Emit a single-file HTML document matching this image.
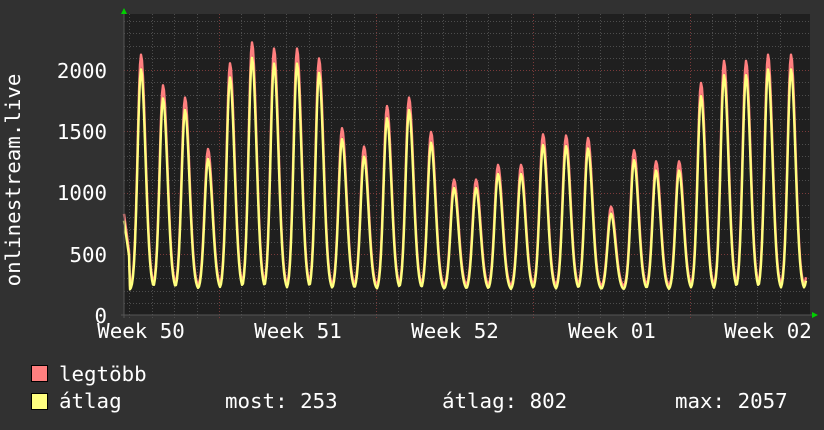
<!DOCTYPE html>
<html><head><meta charset="utf-8"><style>
html,body{margin:0;padding:0;background:#313131;}
svg{display:block}
text{font-family:"DejaVu Sans Mono","Liberation Mono",monospace;font-size:20.8px;fill:#fff}
</style></head><body>
<svg id="s" width="824" height="430" xmlns="http://www.w3.org/2000/svg">
<rect width="824" height="430" fill="#313131"/>
<rect x="124" y="14" width="686" height="301" fill="#1f1f1f"/>
<g id="grid"></g>
<polyline id="pr" fill="none" stroke="#ff7f7f" stroke-width="2.4" stroke-linejoin="round"/>
<polyline id="py" fill="none" stroke="#ffff7f" stroke-width="2.4" stroke-linejoin="round"/>
<line x1="124" y1="10" x2="124" y2="318" stroke="#555" stroke-width="1"/>
<line x1="121" y1="315" x2="814" y2="315" stroke="#555" stroke-width="1"/>
<polygon points="121,14 127,14 124,8" fill="#00d000"/>
<polygon points="812,312 812,318 818,315" fill="#00d000"/>
<text x="107" y="78" text-anchor="end">2000</text>
<text x="107" y="139" text-anchor="end">1500</text>
<text x="107" y="200" text-anchor="end">1000</text>
<text x="107" y="262" text-anchor="end">500</text>
<text x="107" y="323" text-anchor="end">0</text>
<text x="141" y="338" text-anchor="middle">Week 50</text>
<text x="298" y="338" text-anchor="middle">Week 51</text>
<text x="455" y="338" text-anchor="middle">Week 52</text>
<text x="612" y="338" text-anchor="middle">Week 01</text>
<text x="768" y="338" text-anchor="middle">Week 02</text>
<text transform="translate(20,180) rotate(-90)" text-anchor="middle">onlinestream.live</text>
<rect x="31.5" y="365.5" width="16" height="16" fill="#ff7f7f" stroke="#000"/>
<rect x="31.5" y="393.5" width="16" height="16" fill="#ffff7f" stroke="#000"/>
<text x="59" y="381">legtöbb</text>
<text x="59" y="408">átlag</text>
<text x="225" y="408">most: 253</text>
<text x="442" y="408">átlag: 802</text>
<text x="675" y="408">max: 2057</text>
</svg>
<script>
var NS="http://www.w3.org/2000/svg",g=document.getElementById('grid');
function ln(x1,y1,x2,y2,c){var l=document.createElementNS(NS,'line');l.setAttribute('x1',x1);l.setAttribute('y1',y1);l.setAttribute('x2',x2);l.setAttribute('y2',y2);l.setAttribute('stroke',c);l.setAttribute('stroke-width',1);l.setAttribute('stroke-dasharray','1,2');g.appendChild(l);}
function Y(v){return 315-v*0.1225;}
for(var v=100;v<=2400;v+=100){var y=Math.round(Y(v))+0.5;ln(124,y,810,y,v%500==0?'#7a3a3a':'#4d4d4d');}
for(var k=-4;k<26;k++){var x=219+k*22.43;if(x<125||x>809)continue;x=Math.round(x)+0.5;var maj=((k%7)+7)%7==0;ln(x,14,x,318,maj?'#7a3a3a':'#4d4d4d');}
var pk=[[141,2100],[163,1850],[185,1750],[208,1330],[230,2030],[252,2200],[274,2150],[297,2150],[319,2070],[342,1500],[364,1350],[387,1680],[409,1750],[431,1470],[454,1080],[476,1080],[498,1200],[521,1200],[543,1450],[566,1440],[588,1420],[611,860],[634,1320],[656,1230],[679,1230],[701,1870],[724,2050],[746,2050],[768,2100],[791,2100],[813,900]];
var r=[],yl=[];
for(var x=124;x<=806;x+=1){var best=0,tr=200;
for(var i=0;i<pk.length;i++){var d=x-pk[i][0];var s=d<0?4.8:6.3;var f=Math.exp(-Math.pow(d/s,2));var val=(pk[i][1]-tr)*f;if(val>best)best=val;}
if(x<130)best=Math.max(best,600-(x-124)*60);
var a=tr+best*0.95,m=tr+25+best;
r.push(x+','+Y(m).toFixed(1));yl.push(x+','+Y(a).toFixed(1));}
document.getElementById('pr').setAttribute('points',r.join(' '));
document.getElementById('py').setAttribute('points',yl.join(' '));
</script>
</body></html>
